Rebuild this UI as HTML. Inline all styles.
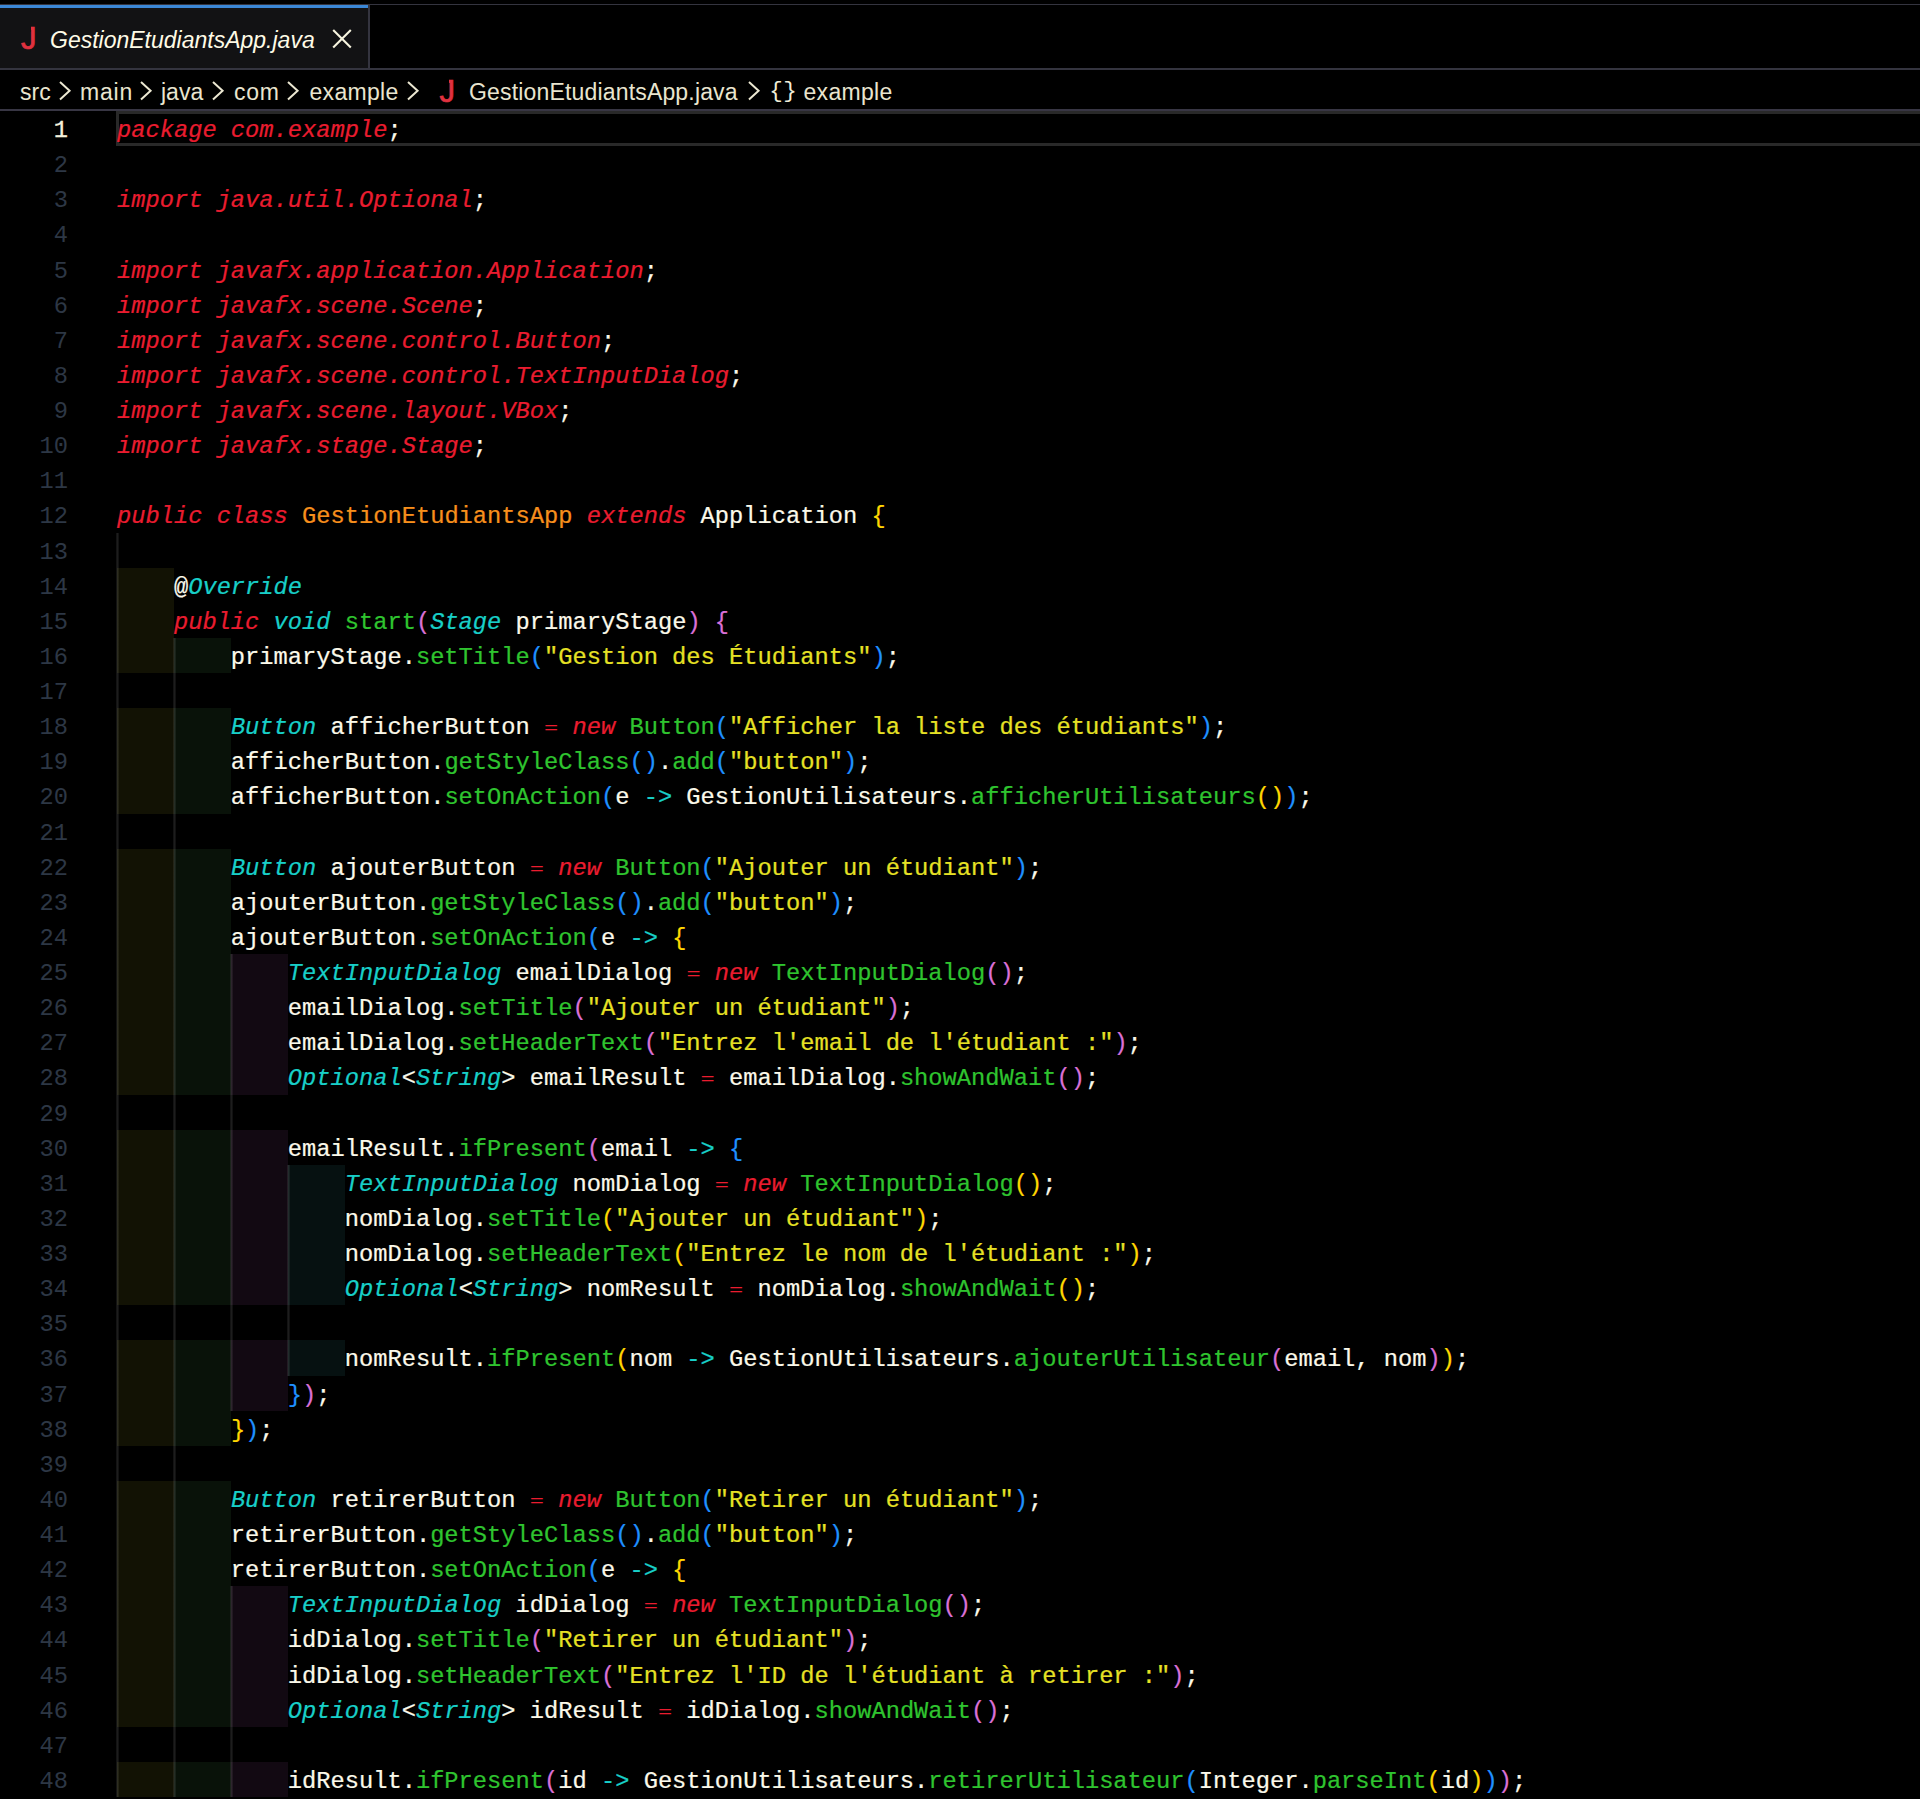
<!DOCTYPE html>
<html lang="fr"><head><meta charset="utf-8"><title>GestionEtudiantsApp.java</title>
<style>
html,body{margin:0;padding:0;background:#000;}
body{width:1920px;height:1799px;position:relative;overflow:hidden;font-family:"Liberation Sans",sans-serif;color:#fff;}
i{display:block;position:absolute;font-style:normal;}
#topline{left:0;top:3.7px;width:1920px;height:1.7px;background:#34343f;}
#tab{left:0;top:5px;width:368px;height:63px;background:#121214;border-top:3px solid #3b87d6;box-sizing:border-box;}
#tabr{left:368px;top:5px;width:2px;height:64px;background:#34343f;}
#tabline{left:0;top:68px;width:1920px;height:2px;background:#34343f;}
#bcline{left:0;top:109px;width:1920px;height:2px;background:#383644;}
.ui{position:absolute;white-space:pre;font-family:"Liberation Sans",sans-serif;color:#e9e5cf;line-height:1;}
#ed{position:absolute;left:0;top:0;width:1920px;height:1799px;}
.ib{width:57px;height:35.125px;}
.i1{background:#121204;}.i2{background:#091209;}.i3{background:#120912;}.i4{background:#061111;}
.g{width:3px;margin-left:-1px;background:linear-gradient(to right,rgba(255,255,255,.075) 0 1px,rgba(255,255,255,.115) 1px 2px,rgba(255,255,255,.065) 2px 3px);}
.ln,.cl{position:absolute;white-space:pre;font-family:"Liberation Mono","DejaVu Sans Mono",monospace;font-size:23.733px;line-height:35.125px;height:35.125px;-webkit-text-stroke:0.22px;}
.ln{left:0;width:68px;text-align:right;color:#2d3745;-webkit-text-stroke:0;}
.ln.cur{color:#f4f1dc;-webkit-text-stroke:0.3px;}
.cl{left:117px;color:#fbf9ea;}
.k{color:#ea1c2f;font-style:italic;}
.t{color:#18cfc8;font-style:italic;}
.f{color:#2fc42f;}
.s{color:#e6e125;}
.c{color:#f78f1c;}
.o{color:#ea1c2f;display:inline-block;transform-origin:50% 16px;transform:translateY(1.6px) scaleY(.7);-webkit-text-stroke:0;}
.a{color:#18cfc8;}
.b1{color:#ffd700;}.b2{color:#da70d6;}.b3{color:#1f90ff;}
#curline{left:116px;top:111px;width:1810px;height:35.3px;border:3.6px solid #292929;box-sizing:border-box;}
.bc{top:81px;font-size:23px;}
.ch{position:absolute;top:80.5px;}
.jic{font-size:31px;color:#e0313f;-webkit-text-stroke:0.7px #e0313f;}
#ns{font-family:"Liberation Mono",monospace;font-size:22.6px;letter-spacing:.4px;color:#f0edd8;}

</style></head><body>
<i id="topline"></i>
<i id="tab"></i><i id="tabr"></i>
<i id="tabline"></i>
<span class="ui jic" id="tj" style="left:21px;top:22.5px;">J</span>
<span class="ui" id="tt" style="left:50px;top:29px;font-size:23px;font-style:italic;color:#fffbe6;">GestionEtudiantsApp.java</span>
<svg id="tx" style="position:absolute;left:332px;top:29px" width="20" height="20" viewBox="0 0 20 20"><path d="M1.2 1.0 L18.8 18.6 M18.8 1.0 L1.2 18.6" stroke="#f7f4df" stroke-width="2.1" fill="none"/></svg>
<span class="ui bc" style="left:20px;">src</span>
<span class="ui bc" style="left:80px;letter-spacing:.8px">main</span>
<span class="ui bc" style="left:161px;">java</span>
<span class="ui bc" style="left:234px;letter-spacing:.7px">com</span>
<span class="ui bc" style="left:309.5px;letter-spacing:.3px">example</span>
<span class="ui jic" id="bj" style="left:439.5px;top:76px;">J</span>
<span class="ui bc" style="left:469px;letter-spacing:.17px">GestionEtudiantsApp.java</span>
<span class="ui" id="ns" style="left:769.3px;top:79.6px;">{}</span>
<span class="ui bc" style="left:803.5px;letter-spacing:.3px">example</span>
<svg class="ch" style="left:59px" width="13" height="20" viewBox="0 0 13 20"><path d="M1 1 L10.6 9.8 L1 18.6" stroke="#ece8d2" stroke-width="2" fill="none"/></svg>
<svg class="ch" style="left:139.5px" width="13" height="20" viewBox="0 0 13 20"><path d="M1 1 L10.6 9.8 L1 18.6" stroke="#ece8d2" stroke-width="2" fill="none"/></svg>
<svg class="ch" style="left:212px" width="13" height="20" viewBox="0 0 13 20"><path d="M1 1 L10.6 9.8 L1 18.6" stroke="#ece8d2" stroke-width="2" fill="none"/></svg>
<svg class="ch" style="left:287px" width="13" height="20" viewBox="0 0 13 20"><path d="M1 1 L10.6 9.8 L1 18.6" stroke="#ece8d2" stroke-width="2" fill="none"/></svg>
<svg class="ch" style="left:406.5px" width="13" height="20" viewBox="0 0 13 20"><path d="M1 1 L10.6 9.8 L1 18.6" stroke="#ece8d2" stroke-width="2" fill="none"/></svg>
<svg class="ch" style="left:748px" width="13" height="20" viewBox="0 0 13 20"><path d="M1 1 L10.6 9.8 L1 18.6" stroke="#ece8d2" stroke-width="2" fill="none"/></svg>
<i style="left:25px;top:24px;width:5.5px;height:7.6px;background:#121214"></i>
<i style="left:443.5px;top:77.5px;width:5.5px;height:7.6px;background:#000"></i>
<i id="bcline"></i>
<i id="curline"></i>

<div id="ed">
<i class="ib i1" style="left:117px;top:567.625px"></i>
<i class="ib i1" style="left:117px;top:602.75px"></i>
<i class="ib i1" style="left:117px;top:637.875px"></i>
<i class="ib i2" style="left:173.96px;top:637.875px"></i>
<i class="ib i1" style="left:117px;top:708.125px"></i>
<i class="ib i2" style="left:173.96px;top:708.125px"></i>
<i class="ib i1" style="left:117px;top:743.25px"></i>
<i class="ib i2" style="left:173.96px;top:743.25px"></i>
<i class="ib i1" style="left:117px;top:778.375px"></i>
<i class="ib i2" style="left:173.96px;top:778.375px"></i>
<i class="ib i1" style="left:117px;top:848.625px"></i>
<i class="ib i2" style="left:173.96px;top:848.625px"></i>
<i class="ib i1" style="left:117px;top:883.75px"></i>
<i class="ib i2" style="left:173.96px;top:883.75px"></i>
<i class="ib i1" style="left:117px;top:918.875px"></i>
<i class="ib i2" style="left:173.96px;top:918.875px"></i>
<i class="ib i1" style="left:117px;top:954px"></i>
<i class="ib i2" style="left:173.96px;top:954px"></i>
<i class="ib i3" style="left:230.92px;top:954px"></i>
<i class="ib i1" style="left:117px;top:989.125px"></i>
<i class="ib i2" style="left:173.96px;top:989.125px"></i>
<i class="ib i3" style="left:230.92px;top:989.125px"></i>
<i class="ib i1" style="left:117px;top:1024.25px"></i>
<i class="ib i2" style="left:173.96px;top:1024.25px"></i>
<i class="ib i3" style="left:230.92px;top:1024.25px"></i>
<i class="ib i1" style="left:117px;top:1059.38px"></i>
<i class="ib i2" style="left:173.96px;top:1059.38px"></i>
<i class="ib i3" style="left:230.92px;top:1059.38px"></i>
<i class="ib i1" style="left:117px;top:1129.62px"></i>
<i class="ib i2" style="left:173.96px;top:1129.62px"></i>
<i class="ib i3" style="left:230.92px;top:1129.62px"></i>
<i class="ib i1" style="left:117px;top:1164.75px"></i>
<i class="ib i2" style="left:173.96px;top:1164.75px"></i>
<i class="ib i3" style="left:230.92px;top:1164.75px"></i>
<i class="ib i4" style="left:287.88px;top:1164.75px"></i>
<i class="ib i1" style="left:117px;top:1199.88px"></i>
<i class="ib i2" style="left:173.96px;top:1199.88px"></i>
<i class="ib i3" style="left:230.92px;top:1199.88px"></i>
<i class="ib i4" style="left:287.88px;top:1199.88px"></i>
<i class="ib i1" style="left:117px;top:1235px"></i>
<i class="ib i2" style="left:173.96px;top:1235px"></i>
<i class="ib i3" style="left:230.92px;top:1235px"></i>
<i class="ib i4" style="left:287.88px;top:1235px"></i>
<i class="ib i1" style="left:117px;top:1270.12px"></i>
<i class="ib i2" style="left:173.96px;top:1270.12px"></i>
<i class="ib i3" style="left:230.92px;top:1270.12px"></i>
<i class="ib i4" style="left:287.88px;top:1270.12px"></i>
<i class="ib i1" style="left:117px;top:1340.38px"></i>
<i class="ib i2" style="left:173.96px;top:1340.38px"></i>
<i class="ib i3" style="left:230.92px;top:1340.38px"></i>
<i class="ib i4" style="left:287.88px;top:1340.38px"></i>
<i class="ib i1" style="left:117px;top:1375.5px"></i>
<i class="ib i2" style="left:173.96px;top:1375.5px"></i>
<i class="ib i3" style="left:230.92px;top:1375.5px"></i>
<i class="ib i1" style="left:117px;top:1410.62px"></i>
<i class="ib i2" style="left:173.96px;top:1410.62px"></i>
<i class="ib i1" style="left:117px;top:1480.88px"></i>
<i class="ib i2" style="left:173.96px;top:1480.88px"></i>
<i class="ib i1" style="left:117px;top:1516px"></i>
<i class="ib i2" style="left:173.96px;top:1516px"></i>
<i class="ib i1" style="left:117px;top:1551.12px"></i>
<i class="ib i2" style="left:173.96px;top:1551.12px"></i>
<i class="ib i1" style="left:117px;top:1586.25px"></i>
<i class="ib i2" style="left:173.96px;top:1586.25px"></i>
<i class="ib i3" style="left:230.92px;top:1586.25px"></i>
<i class="ib i1" style="left:117px;top:1621.38px"></i>
<i class="ib i2" style="left:173.96px;top:1621.38px"></i>
<i class="ib i3" style="left:230.92px;top:1621.38px"></i>
<i class="ib i1" style="left:117px;top:1656.5px"></i>
<i class="ib i2" style="left:173.96px;top:1656.5px"></i>
<i class="ib i3" style="left:230.92px;top:1656.5px"></i>
<i class="ib i1" style="left:117px;top:1691.62px"></i>
<i class="ib i2" style="left:173.96px;top:1691.62px"></i>
<i class="ib i3" style="left:230.92px;top:1691.62px"></i>
<i class="ib i1" style="left:117px;top:1761.88px"></i>
<i class="ib i2" style="left:173.96px;top:1761.88px"></i>
<i class="ib i3" style="left:230.92px;top:1761.88px"></i>
<i class="g" style="left:117px;top:532.5px;height:1264.5px"></i>
<i class="g" style="left:173.96px;top:637.875px;height:1159.12px"></i>
<i class="g" style="left:230.92px;top:954px;height:456.625px"></i>
<i class="g" style="left:287.88px;top:1164.75px;height:210.75px"></i>
<i class="g" style="left:230.92px;top:1586.25px;height:210.75px"></i>
<div class="ln cur" style="top:113px">1</div>
<div class="cl" style="top:113px"><span class="k">package com.example</span>;</div>
<div class="ln" style="top:148.125px">2</div>
<div class="ln" style="top:183.25px">3</div>
<div class="cl" style="top:183.25px"><span class="k">import java.util.Optional</span>;</div>
<div class="ln" style="top:218.375px">4</div>
<div class="ln" style="top:253.5px">5</div>
<div class="cl" style="top:253.5px"><span class="k">import javafx.application.Application</span>;</div>
<div class="ln" style="top:288.625px">6</div>
<div class="cl" style="top:288.625px"><span class="k">import javafx.scene.Scene</span>;</div>
<div class="ln" style="top:323.75px">7</div>
<div class="cl" style="top:323.75px"><span class="k">import javafx.scene.control.Button</span>;</div>
<div class="ln" style="top:358.875px">8</div>
<div class="cl" style="top:358.875px"><span class="k">import javafx.scene.control.TextInputDialog</span>;</div>
<div class="ln" style="top:394px">9</div>
<div class="cl" style="top:394px"><span class="k">import javafx.scene.layout.VBox</span>;</div>
<div class="ln" style="top:429.125px">10</div>
<div class="cl" style="top:429.125px"><span class="k">import javafx.stage.Stage</span>;</div>
<div class="ln" style="top:464.25px">11</div>
<div class="ln" style="top:499.375px">12</div>
<div class="cl" style="top:499.375px"><span class="k">public class</span> <span class="c">GestionEtudiantsApp</span> <span class="k">extends</span> Application <span class="b1">{</span></div>
<div class="ln" style="top:534.5px">13</div>
<div class="ln" style="top:569.625px">14</div>
<div class="cl" style="top:569.625px">    @<span class="t">Override</span></div>
<div class="ln" style="top:604.75px">15</div>
<div class="cl" style="top:604.75px">    <span class="k">public</span> <span class="t">void</span> <span class="f">start</span><span class="b2">(</span><span class="t">Stage</span> primaryStage<span class="b2">)</span> <span class="b2">{</span></div>
<div class="ln" style="top:639.875px">16</div>
<div class="cl" style="top:639.875px">        primaryStage.<span class="f">setTitle</span><span class="b3">(</span><span class="s">"Gestion des Étudiants"</span><span class="b3">)</span>;</div>
<div class="ln" style="top:675px">17</div>
<div class="ln" style="top:710.125px">18</div>
<div class="cl" style="top:710.125px">        <span class="t">Button</span> afficherButton <span class="o">=</span> <span class="k">new</span> <span class="f">Button</span><span class="b3">(</span><span class="s">"Afficher la liste des étudiants"</span><span class="b3">)</span>;</div>
<div class="ln" style="top:745.25px">19</div>
<div class="cl" style="top:745.25px">        afficherButton.<span class="f">getStyleClass</span><span class="b3">()</span>.<span class="f">add</span><span class="b3">(</span><span class="s">"button"</span><span class="b3">)</span>;</div>
<div class="ln" style="top:780.375px">20</div>
<div class="cl" style="top:780.375px">        afficherButton.<span class="f">setOnAction</span><span class="b3">(</span>e <span class="a">-&gt;</span> GestionUtilisateurs.<span class="f">afficherUtilisateurs</span><span class="b1">()</span><span class="b3">)</span>;</div>
<div class="ln" style="top:815.5px">21</div>
<div class="ln" style="top:850.625px">22</div>
<div class="cl" style="top:850.625px">        <span class="t">Button</span> ajouterButton <span class="o">=</span> <span class="k">new</span> <span class="f">Button</span><span class="b3">(</span><span class="s">"Ajouter un étudiant"</span><span class="b3">)</span>;</div>
<div class="ln" style="top:885.75px">23</div>
<div class="cl" style="top:885.75px">        ajouterButton.<span class="f">getStyleClass</span><span class="b3">()</span>.<span class="f">add</span><span class="b3">(</span><span class="s">"button"</span><span class="b3">)</span>;</div>
<div class="ln" style="top:920.875px">24</div>
<div class="cl" style="top:920.875px">        ajouterButton.<span class="f">setOnAction</span><span class="b3">(</span>e <span class="a">-&gt;</span> <span class="b1">{</span></div>
<div class="ln" style="top:956px">25</div>
<div class="cl" style="top:956px">            <span class="t">TextInputDialog</span> emailDialog <span class="o">=</span> <span class="k">new</span> <span class="f">TextInputDialog</span><span class="b2">()</span>;</div>
<div class="ln" style="top:991.125px">26</div>
<div class="cl" style="top:991.125px">            emailDialog.<span class="f">setTitle</span><span class="b2">(</span><span class="s">"Ajouter un étudiant"</span><span class="b2">)</span>;</div>
<div class="ln" style="top:1026.25px">27</div>
<div class="cl" style="top:1026.25px">            emailDialog.<span class="f">setHeaderText</span><span class="b2">(</span><span class="s">"Entrez l'email de l'étudiant :"</span><span class="b2">)</span>;</div>
<div class="ln" style="top:1061.38px">28</div>
<div class="cl" style="top:1061.38px">            <span class="t">Optional</span>&lt;<span class="t">String</span>&gt; emailResult <span class="o">=</span> emailDialog.<span class="f">showAndWait</span><span class="b2">()</span>;</div>
<div class="ln" style="top:1096.5px">29</div>
<div class="ln" style="top:1131.62px">30</div>
<div class="cl" style="top:1131.62px">            emailResult.<span class="f">ifPresent</span><span class="b2">(</span>email <span class="a">-&gt;</span> <span class="b3">{</span></div>
<div class="ln" style="top:1166.75px">31</div>
<div class="cl" style="top:1166.75px">                <span class="t">TextInputDialog</span> nomDialog <span class="o">=</span> <span class="k">new</span> <span class="f">TextInputDialog</span><span class="b1">()</span>;</div>
<div class="ln" style="top:1201.88px">32</div>
<div class="cl" style="top:1201.88px">                nomDialog.<span class="f">setTitle</span><span class="b1">(</span><span class="s">"Ajouter un étudiant"</span><span class="b1">)</span>;</div>
<div class="ln" style="top:1237px">33</div>
<div class="cl" style="top:1237px">                nomDialog.<span class="f">setHeaderText</span><span class="b1">(</span><span class="s">"Entrez le nom de l'étudiant :"</span><span class="b1">)</span>;</div>
<div class="ln" style="top:1272.12px">34</div>
<div class="cl" style="top:1272.12px">                <span class="t">Optional</span>&lt;<span class="t">String</span>&gt; nomResult <span class="o">=</span> nomDialog.<span class="f">showAndWait</span><span class="b1">()</span>;</div>
<div class="ln" style="top:1307.25px">35</div>
<div class="ln" style="top:1342.38px">36</div>
<div class="cl" style="top:1342.38px">                nomResult.<span class="f">ifPresent</span><span class="b1">(</span>nom <span class="a">-&gt;</span> GestionUtilisateurs.<span class="f">ajouterUtilisateur</span><span class="b2">(</span>email, nom<span class="b2">)</span><span class="b1">)</span>;</div>
<div class="ln" style="top:1377.5px">37</div>
<div class="cl" style="top:1377.5px">            <span class="b3">}</span><span class="b2">)</span>;</div>
<div class="ln" style="top:1412.62px">38</div>
<div class="cl" style="top:1412.62px">        <span class="b1">}</span><span class="b3">)</span>;</div>
<div class="ln" style="top:1447.75px">39</div>
<div class="ln" style="top:1482.88px">40</div>
<div class="cl" style="top:1482.88px">        <span class="t">Button</span> retirerButton <span class="o">=</span> <span class="k">new</span> <span class="f">Button</span><span class="b3">(</span><span class="s">"Retirer un étudiant"</span><span class="b3">)</span>;</div>
<div class="ln" style="top:1518px">41</div>
<div class="cl" style="top:1518px">        retirerButton.<span class="f">getStyleClass</span><span class="b3">()</span>.<span class="f">add</span><span class="b3">(</span><span class="s">"button"</span><span class="b3">)</span>;</div>
<div class="ln" style="top:1553.12px">42</div>
<div class="cl" style="top:1553.12px">        retirerButton.<span class="f">setOnAction</span><span class="b3">(</span>e <span class="a">-&gt;</span> <span class="b1">{</span></div>
<div class="ln" style="top:1588.25px">43</div>
<div class="cl" style="top:1588.25px">            <span class="t">TextInputDialog</span> idDialog <span class="o">=</span> <span class="k">new</span> <span class="f">TextInputDialog</span><span class="b2">()</span>;</div>
<div class="ln" style="top:1623.38px">44</div>
<div class="cl" style="top:1623.38px">            idDialog.<span class="f">setTitle</span><span class="b2">(</span><span class="s">"Retirer un étudiant"</span><span class="b2">)</span>;</div>
<div class="ln" style="top:1658.5px">45</div>
<div class="cl" style="top:1658.5px">            idDialog.<span class="f">setHeaderText</span><span class="b2">(</span><span class="s">"Entrez l'ID de l'étudiant à retirer :"</span><span class="b2">)</span>;</div>
<div class="ln" style="top:1693.62px">46</div>
<div class="cl" style="top:1693.62px">            <span class="t">Optional</span>&lt;<span class="t">String</span>&gt; idResult <span class="o">=</span> idDialog.<span class="f">showAndWait</span><span class="b2">()</span>;</div>
<div class="ln" style="top:1728.75px">47</div>
<div class="ln" style="top:1763.88px">48</div>
<div class="cl" style="top:1763.88px">            idResult.<span class="f">ifPresent</span><span class="b2">(</span>id <span class="a">-&gt;</span> GestionUtilisateurs.<span class="f">retirerUtilisateur</span><span class="b3">(</span>Integer.<span class="f">parseInt</span><span class="b1">(</span>id<span class="b1">)</span><span class="b3">)</span><span class="b2">)</span>;</div>
</div>
</body></html>
